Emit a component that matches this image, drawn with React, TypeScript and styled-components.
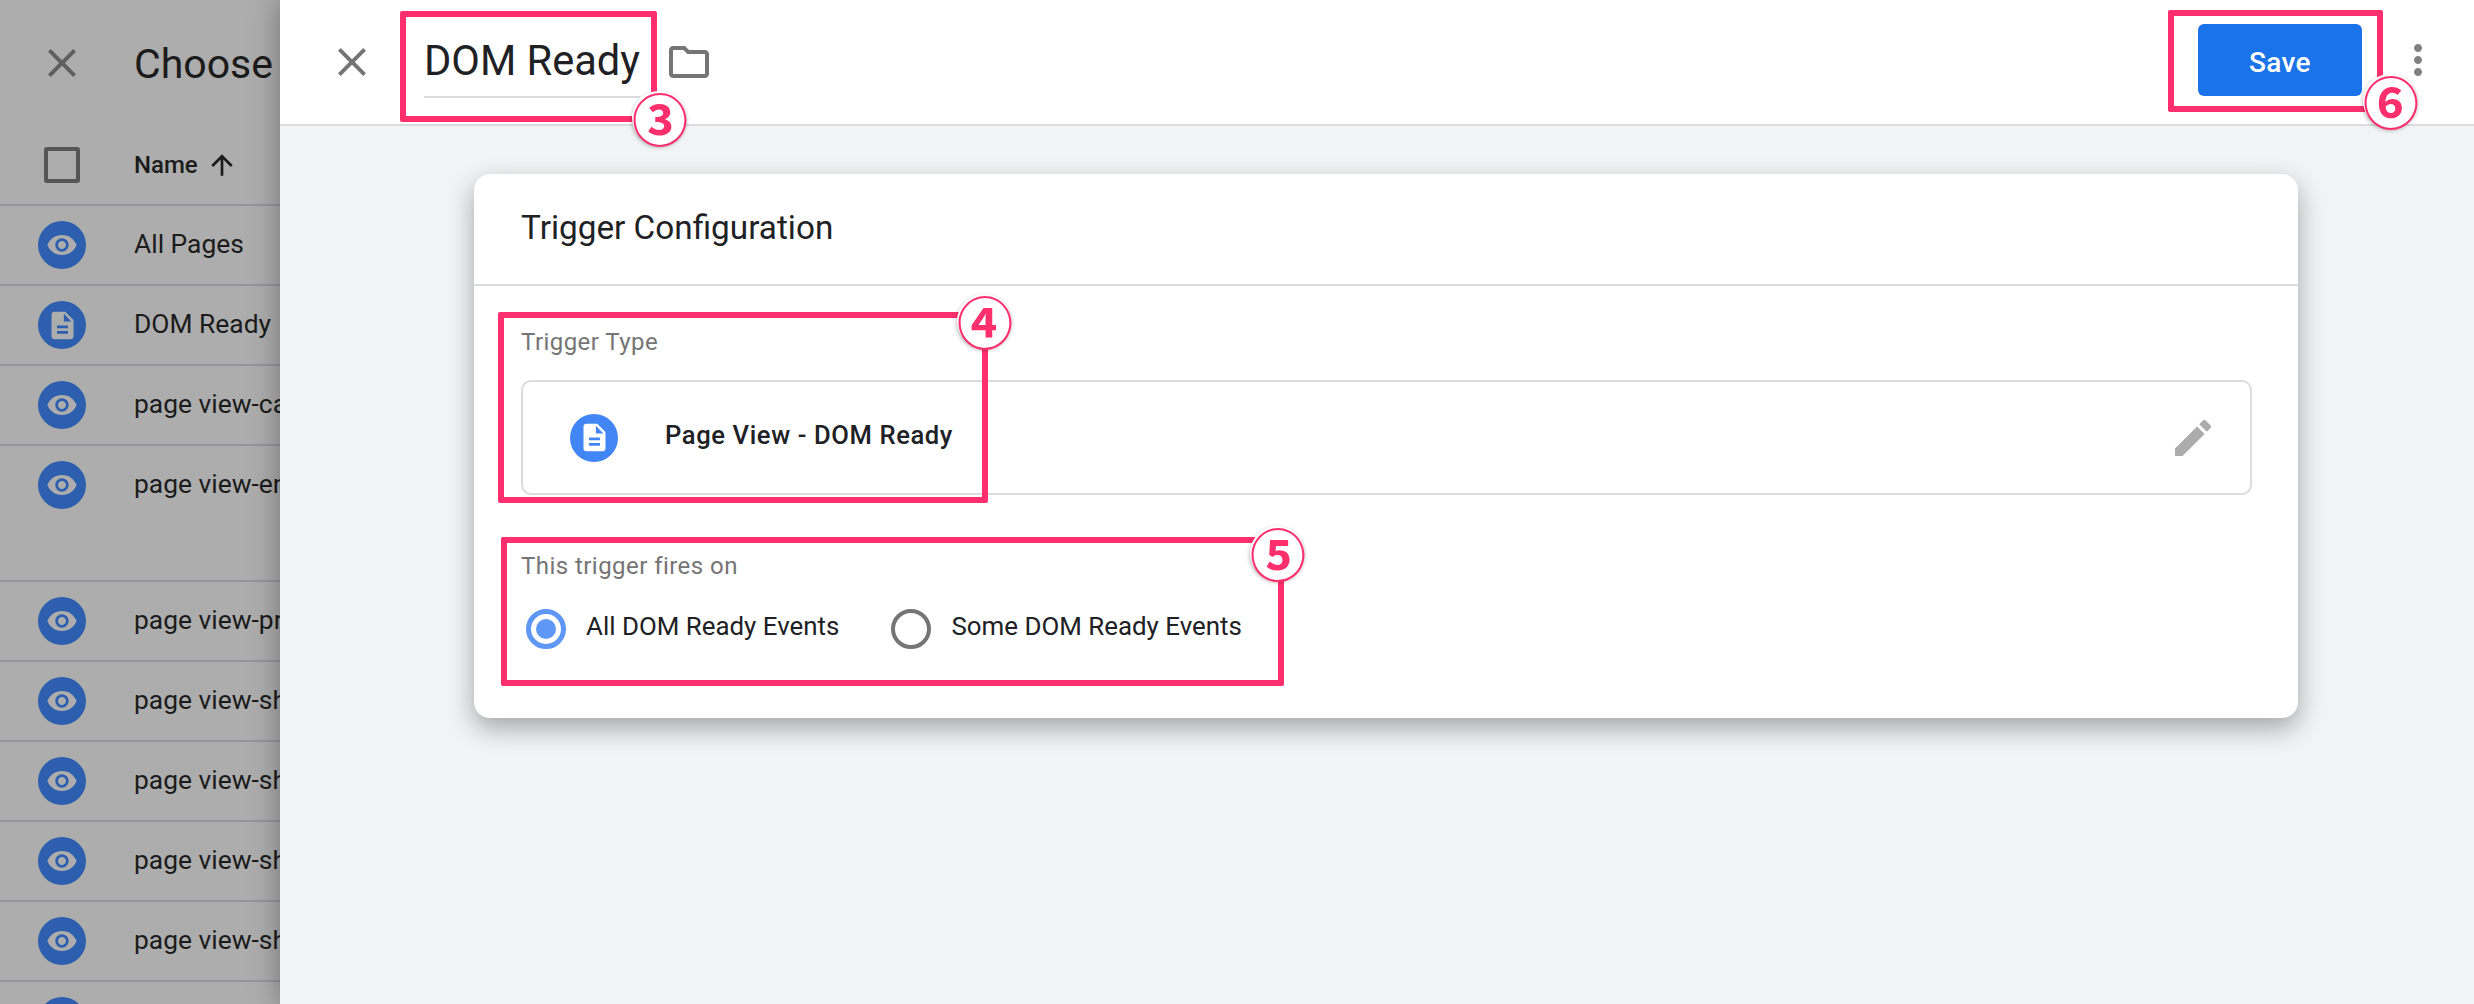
import React from "react";
import styled, { createGlobalStyle } from "styled-components";
import {
  MdArrowUpward,
  MdClose,
  MdDescription,
  MdEdit,
  MdMoreVert,
  MdOutlineFolder,
  MdRemoveRedEye,
} from "react-icons/md";

const triggers = [
  { name: "All Pages", kind: "view" },
  { name: "DOM Ready", kind: "dom" },
  { name: "page view-cart", kind: "view" },
  { name: "page view-entry", kind: "view", tall: true },
  { name: "page view-product", kind: "view" },
  { name: "page view-shop", kind: "view" },
  { name: "page view-shipping", kind: "view" },
  { name: "page view-shipped", kind: "view" },
  { name: "page view-share", kind: "view" },
  { name: "page view-top", kind: "view" },
];

const marks = [
  { x: 400, y: 11, w: 257, h: 111, badge: "③", bx: 659, by: 118 },
  { x: 498, y: 312, w: 490, h: 191, badge: "④", bx: 984, by: 321 },
  { x: 501, y: 537, w: 783, h: 149, badge: "⑤", bx: 1277, by: 553 },
  { x: 2168, y: 10, w: 215, h: 102, badge: "⑥", bx: 2390, by: 101 },
];

export default function App() {
  return (
    <Page>
      <GlobalStyle />
      <ListPanel>
        <ListHeader>
          <MdClose size={48} color="#5f5f5f" />
          <ListTitle>Choose a trigger</ListTitle>
        </ListHeader>
        <ColumnRow>
          <CheckBox />
          <ColumnName>Name</ColumnName>
          <MdArrowUpward size={32} color="#1b1b1b" />
        </ColumnRow>
        {triggers.map((t) => (
          <TriggerRow key={t.name} $tall={t.tall}>
            <TypeBadge>
              {t.kind === "view" ? (
                <MdRemoveRedEye size={32} />
              ) : (
                <MdDescription size={33} />
              )}
            </TypeBadge>
            <TriggerName>{t.name}</TriggerName>
          </TriggerRow>
        ))}
      </ListPanel>

      <EditorPanel>
        <EditorHeader>
          <MdClose size={48} color="#757575" />
          <NameField>DOM Ready</NameField>
          <MdOutlineFolder size={48} color="#757575" />
          <Spacer />
          <SaveButton>Save</SaveButton>
          <MoreButton>
            <MdMoreVert size={48} color="#808080" />
          </MoreButton>
        </EditorHeader>
        <EditorBody>
          <Card>
            <CardTitle>Trigger Configuration</CardTitle>
            <CardBody>
              <FieldLabel>Trigger Type</FieldLabel>
              <TypeBox>
                <TypeIcon>
                  <MdDescription size={33} />
                </TypeIcon>
                <TypeName>Page View - DOM Ready</TypeName>
                <MdEdit size={48} color="#acacac" />
              </TypeBox>
              <FiresLabel>This trigger fires on</FiresLabel>
              <RadioGroup>
                <Radio $checked />
                <RadioText>All DOM Ready Events</RadioText>
                <Radio />
                <RadioText>Some DOM Ready Events</RadioText>
              </RadioGroup>
            </CardBody>
          </Card>
        </EditorBody>
      </EditorPanel>

      {marks.map((m) => (
        <React.Fragment key={m.badge}>
          <Highlight $x={m.x} $y={m.y} $w={m.w} $h={m.h} />
          <Badge $x={m.bx} $y={m.by}>
            {m.badge}
          </Badge>
        </React.Fragment>
      ))}
    </Page>
  );
}

const GlobalStyle = createGlobalStyle`
  html, body {
    margin: 0;
    padding: 0;
    background: #f1f3f4;
  }
  * {
    box-sizing: border-box;
  }
  svg {
    flex-shrink: 0;
  }
`;

const Page = styled.div`
  position: relative;
  display: flex;
  width: 2474px;
  height: 1004px;
  overflow: hidden;
  font-family: Roboto, "Liberation Sans", sans-serif;
`;

const ListPanel = styled.div`
  flex: 0 0 280px;
  overflow: hidden;
  background: #adadad;
`;

const ListHeader = styled.div`
  display: flex;
  align-items: center;
  gap: 48px;
  height: 126px;
  padding-left: 38px;
  white-space: nowrap;
`;

const ListTitle = styled.div`
  padding-top: 2px;
  font-size: 41px;
  color: #1b1b1b;
`;

const ColumnRow = styled.div`
  display: flex;
  align-items: center;
  height: 80px;
  padding-left: 44px;
  border-bottom: 2px solid #96969b;
`;

const CheckBox = styled.div`
  flex: 0 0 36px;
  height: 36px;
  margin-right: 54px;
  border: 4px solid #555;
  border-radius: 3px;
`;

const ColumnName = styled.div`
  margin-right: 8px;
  font-size: 24px;
  font-weight: 500;
  color: #1b1b1b;
`;

const TriggerRow = styled.div<{ $tall?: boolean }>`
  display: flex;
  align-items: flex-start;
  height: ${(p) => (p.$tall ? "136px" : "80px")};
  padding: 15px 0 0 38px;
  border-bottom: 2px solid #96969b;
  white-space: nowrap;
`;

const TypeBadge = styled.div`
  display: flex;
  flex: 0 0 48px;
  align-items: center;
  justify-content: center;
  height: 48px;
  margin-right: 48px;
  border-radius: 50%;
  background: #2d5fae;
  color: #adadad;
`;

const TriggerName = styled.div`
  font-size: 26.4px;
  line-height: 46px;
  color: #1b1b1b;
`;

const EditorPanel = styled.div`
  position: relative;
  display: flex;
  flex: 1;
  flex-direction: column;
  background: #f1f3f4;
  box-shadow: 0 0 28px rgba(0, 0, 0, 0.35);
`;

const EditorHeader = styled.div`
  display: flex;
  flex: 0 0 126px;
  align-items: center;
  padding: 0 32px 0 48px;
  border-bottom: 2px solid #dadce0;
  background: #fff;
`;

const NameField = styled.div`
  height: 66px;
  margin: 6px 25px 0 48px;
  border-bottom: 2px solid #dadce0;
  font-size: 41.6px;
  line-height: 58px;
  white-space: nowrap;
  color: #202124;
`;

const Spacer = styled.div`
  flex: 1;
`;

const SaveButton = styled.div`
  width: 164px;
  height: 72px;
  margin: 0 32px 4px 0;
  border-radius: 6px;
  background: #1a73e8;
  font-size: 28px;
  font-weight: 500;
  line-height: 77px;
  letter-spacing: 0.3px;
  text-align: center;
  color: #fff;
`;

const MoreButton = styled.div`
  display: flex;
  margin-bottom: 4px;
`;

const EditorBody = styled.div`
  flex: 1;
  padding: 48px 176px 0 194px;
`;

const Card = styled.div`
  height: 544px;
  border-radius: 16px;
  background: #fff;
  box-shadow: 0 10px 26px rgba(0, 0, 0, 0.32);
`;

const CardTitle = styled.div`
  height: 112px;
  padding-left: 47px;
  border-bottom: 2px solid #dadce0;
  font-size: 33.3px;
  line-height: 108px;
  color: #202124;
`;

const CardBody = styled.div`
  padding: 39px 46px 0 47px;
`;

const FieldLabel = styled.div`
  font-size: 24px;
  line-height: 34px;
  letter-spacing: 0.45px;
  color: #757575;
`;

const TypeBox = styled.div`
  display: flex;
  align-items: center;
  height: 115px;
  margin-top: 21px;
  padding: 0 33px 0 47px;
  border: 2px solid #dadce0;
  border-radius: 10px;
`;

const TypeIcon = styled.div`
  display: flex;
  flex: 0 0 48px;
  align-items: center;
  justify-content: center;
  height: 48px;
  margin-right: 47px;
  border-radius: 50%;
  background: #4285f4;
  color: #fff;
`;

const TypeName = styled.div`
  flex: 1;
  padding-bottom: 6px;
  font-size: 25.6px;
  font-weight: 500;
  letter-spacing: 0.6px;
  color: #202124;
`;

const FiresLabel = styled(FieldLabel)`
  margin-top: 54px;
`;

const RadioGroup = styled.div`
  display: flex;
  align-items: center;
  margin: 26px 0 0 5px;
`;

const Radio = styled.div<{ $checked?: boolean }>`
  position: relative;
  flex: 0 0 40px;
  height: 40px;
  margin-right: 20px;
  border: ${(p) => (p.$checked ? "5px solid #5e97f6" : "4.5px solid #757575")};
  border-radius: 50%;

  &::after {
    content: "";
    display: ${(p) => (p.$checked ? "block" : "none")};
    position: absolute;
    inset: 5px;
    border-radius: 50%;
    background: #5e97f6;
  }
`;

const RadioText = styled.div`
  margin: 0 52px 7px 0;
  font-size: 25.9px;
  color: #202124;
`;

const Highlight = styled.div<{ $x: number; $y: number; $w: number; $h: number }>`
  position: absolute;
  left: ${(p) => p.$x}px;
  top: ${(p) => p.$y}px;
  width: ${(p) => p.$w}px;
  height: ${(p) => p.$h}px;
  border: 6px solid #ff2f6e;
  border-radius: 2px;
  pointer-events: none;
`;

const Badge = styled.div<{ $x: number; $y: number }>`
  position: absolute;
  left: ${(p) => p.$x - 27}px;
  top: ${(p) => p.$y - 27}px;
  width: 54px;
  height: 54px;
  border-radius: 50%;
  background: #fff;
  box-shadow: 0 2px 4px rgba(0, 0, 0, 0.35);
  font-family: "Noto Sans CJK JP", sans-serif;
  font-size: 56px;
  font-weight: 700;
  line-height: 52px;
  text-align: center;
  color: #ff2f6e;
`;
